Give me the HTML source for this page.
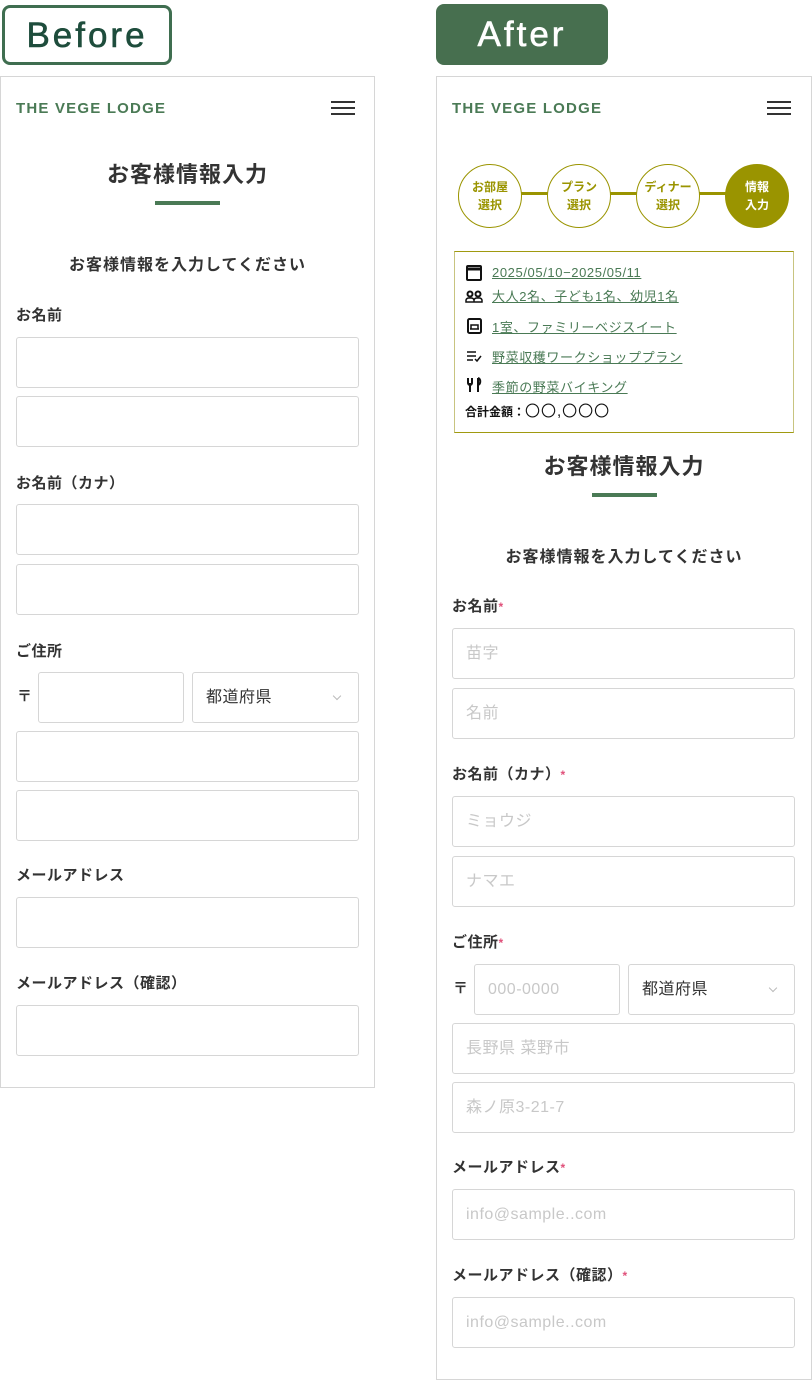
<!DOCTYPE html>
<html><head><meta charset="utf-8"><style>
*{box-sizing:border-box;margin:0;padding:0}
body{width:812px;height:1380px;background:#fff;position:relative;font-family:"Liberation Sans","Noto Sans CJK JP",sans-serif;color:#333;overflow:hidden}
.a{position:absolute}
.tag{position:absolute;font-size:35px;letter-spacing:3px;text-align:center;line-height:56px;border-radius:8px;-webkit-text-stroke:.6px}
.panel{position:absolute;border:1px solid #d6d6d6;background:#fff}
.logo{position:absolute;left:15px;top:24px;font-size:15px;font-weight:bold;color:#4a7a55;letter-spacing:1.2px;line-height:16px}
.ham{position:absolute;left:330px;top:24px;width:24px;height:14px;border-top:2px solid #333;border-bottom:2px solid #333}
.ham:after{content:"";position:absolute;left:0;top:4px;width:24px;height:2px;background:#333}
.title{position:absolute;left:0;width:100%;text-align:center;font-size:22px;font-weight:bold;line-height:30px;letter-spacing:1px}
.ul{position:absolute;left:154px;width:65px;height:4px;background:#4a7a55}
.sub{position:absolute;left:0;width:100%;text-align:center;font-size:16px;font-weight:bold;line-height:22px;letter-spacing:1px}
.lb{position:absolute;left:15px;font-size:15px;font-weight:bold;line-height:20px;letter-spacing:.5px}
.lb i{color:#e0507a;font-style:normal;font-size:12px;vertical-align:top}
.in{position:absolute;left:15px;width:343px;height:51px;border:1px solid #d6d6d6;border-radius:3px;font-size:16px;color:#c8c8c8;padding-left:13px;line-height:49px;letter-spacing:.5px}
.sel{color:#333}
.sel:after{content:"";position:absolute;right:18px;top:20px;width:5px;height:5px;border-right:1px solid #bbb;border-bottom:1px solid #bbb;transform:rotate(45deg)}
.yu{position:absolute;left:19px;font-size:15px;font-weight:bold;line-height:20px}
.circ{position:absolute;width:64px;height:64px;border-radius:50%;border:1.5px solid #9a9400;background:#fff;color:#9a9400;font-size:12px;font-weight:bold;text-align:center;line-height:18px;padding-top:13px}
.row{position:absolute;left:28px;font-size:13px;color:#4a7a55;text-decoration:underline;line-height:16px;letter-spacing:.6px}
</style></head><body>
<div class="tag" style="left:2px;top:5px;width:170px;height:60px;border:3px solid #3f6e50;color:#1e4d3c">Before</div>
<div class="tag" style="left:436px;top:4px;width:172px;height:61px;background:#476f4f;color:#fff;line-height:61px">After</div>

<div class="panel" style="left:0;top:76px;width:375px;height:1012px">
<div class="logo">THE VEGE LODGE</div><div class="ham"></div>
<div class="title" style="top:83px">お客様情報入力</div>
<div class="ul" style="top:124px"></div>
<div class="sub" style="top:178px">お客様情報を入力してください</div>
<div class="lb" style="top:229px">お名前</div>
<div class="in" style="top:260px"></div><div class="in" style="top:319px"></div>
<div class="lb" style="top:397px">お名前（カナ）</div>
<div class="in" style="top:427px"></div><div class="in" style="top:487px"></div>
<div class="lb" style="top:565px">ご住所</div>
<div class="yu" style="top:610px;left:16px">〒</div>
<div class="in" style="top:595px;left:37px;width:146px"></div>
<div class="in sel" style="top:595px;left:191px;width:167px">都道府県</div>
<div class="in" style="top:654px"></div><div class="in" style="top:713px"></div>
<div class="lb" style="top:789px">メールアドレス</div>
<div class="in" style="top:820px"></div>
<div class="lb" style="top:897px">メールアドレス（確認）</div>
<div class="in" style="top:928px"></div>
</div>

<div class="panel" style="left:436px;top:76px;width:376px;height:1304px">
<div class="logo">THE VEGE LODGE</div><div class="ham"></div>
<div class="a" style="left:80px;top:115px;width:210px;height:3px;background:#9a9400"></div>
<div class="circ" style="left:21px;top:87px">お部屋<br>選択</div>
<div class="circ" style="left:110px;top:87px">プラン<br>選択</div>
<div class="circ" style="left:199px;top:87px">ディナー<br>選択</div>
<div class="circ" style="left:288px;top:87px;background:#9a9400;color:#fff">情報<br>入力</div>
<div class="a" style="left:17px;top:174px;width:340px;height:182px;border:1px solid #a09a10;border-color:#a09a10 #c8c480 #a09a10 #c8c480"></div>
<div class="row" style="top:188px;left:55px">2025/05/10−2025/05/11</div>
<div class="row" style="top:212px;left:55px">大人2名、子ども1名、幼児1名</div>
<div class="row" style="top:243px;left:55px">1室、ファミリーベジスイート</div>
<div class="row" style="top:273px;left:55px">野菜収穫ワークショッププラン</div>
<div class="row" style="top:303px;left:55px">季節の野菜バイキング</div>
<svg class="a" style="left:28px;top:186px" width="20" height="130" viewBox="0 0 20 130" fill="none" stroke="#111" stroke-width="2">
<rect x="2" y="3" width="14" height="14" rx="1"/><line x1="2" y1="6" x2="16" y2="6" stroke-width="3"/>
<circle cx="5" cy="31" r="2.5"/><circle cx="13" cy="31" r="2.5"/><path d="M1 39v-2a3 3 0 0 1 3-2h2a3 3 0 0 1 3 2v2zM9 39v-2a3 3 0 0 1 3-2h2a3 3 0 0 1 3 2v2z" stroke-width="1.5"/>
<rect x="3" y="56" width="13" height="14" rx="1.5"/><path d="M6 66v-4h7v4M5 66h9" stroke-width="1.5"/>
<path d="M2 89h9M2 93h9M2 97h6M10 96l2 2 4-5" stroke-width="1.5"/>
<path d="M3 115v5a2 2 0 0 0 4 0v-5M5 120v9M13 115v14M13 115c3 1 3 6 0 7" stroke-width="2"/>
</svg>
<div class="a" style="left:28px;top:327px;font-size:12px;font-weight:bold;color:#111;line-height:16px">合計金額：<span style="font-size:15px;font-weight:normal;letter-spacing:1px">〇〇,〇〇〇</span></div>
<div class="title" style="top:375px">お客様情報入力</div>
<div class="ul" style="top:416px;left:155px"></div>
<div class="sub" style="top:470px">お客様情報を入力してください</div>
<div class="lb" style="top:520px">お名前<i>*</i></div>
<div class="in" style="top:551px">苗字</div><div class="in" style="top:611px">名前</div>
<div class="lb" style="top:688px">お名前（カナ）<i>*</i></div>
<div class="in" style="top:719px">ミョウジ</div><div class="in" style="top:779px">ナマエ</div>
<div class="lb" style="top:856px">ご住所<i>*</i></div>
<div class="yu" style="top:902px;left:16px">〒</div>
<div class="in" style="top:887px;left:37px;width:146px">000-0000</div>
<div class="in sel" style="top:887px;left:191px;width:167px">都道府県</div>
<div class="in" style="top:946px">長野県 菜野市</div><div class="in" style="top:1005px">森ノ原3-21-7</div>
<div class="lb" style="top:1081px">メールアドレス<i>*</i></div>
<div class="in" style="top:1112px">info@sample..com</div>
<div class="lb" style="top:1189px">メールアドレス（確認）<i>*</i></div>
<div class="in" style="top:1220px">info@sample..com</div>
</div>
</body></html>
